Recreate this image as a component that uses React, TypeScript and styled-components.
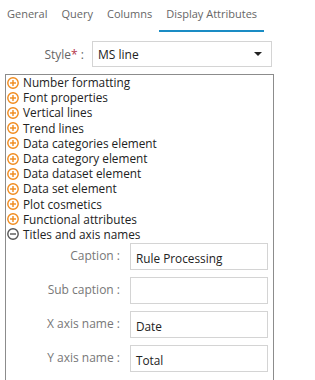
import { FC } from 'react';
import styled, { createGlobalStyle } from 'styled-components';

const GlobalStyle = createGlobalStyle`
  body {
    margin: 0;
    background: #fff;
    font-family: 'Open Sans', 'Noto Sans', sans-serif;
  }
`;

const sections = [
  'Number formatting',
  'Font properties',
  'Vertical lines',
  'Trend lines',
  'Data categories element',
  'Data category element',
  'Data dataset element',
  'Data set element',
  'Plot cosmetics',
  'Functional attributes',
];

const fields = [
  { label: 'Caption', value: 'Rule Processing' },
  { label: 'Sub caption', value: '' },
  { label: 'X axis name', value: 'Date' },
  { label: 'Y axis name', value: 'Total' },
];

const tabs = ['General', 'Query', 'Columns', 'Display Attributes'];

const ToggleIcon: FC<{ open?: boolean }> = ({ open }) => {
  const color = open ? '#555' : '#f08a1c';
  return (
    <svg width="12" height="12" viewBox="0 0 12 12">
      <circle cx="6" cy="6" r="5.2" fill="none" stroke={color} strokeWidth="1.4" />
      <line x1="3" y1="6" x2="9" y2="6" stroke={color} strokeWidth="1.4" />
      {!open && <line x1="6" y1="3" x2="6" y2="9" stroke={color} strokeWidth="1.4" />}
    </svg>
  );
};

const App: FC = () => (
  <Page>
    <GlobalStyle />
    <TabBar>
      {tabs.map((t, i) => (
        <Tab key={t} active={i === tabs.length - 1}>
          {t}
        </Tab>
      ))}
    </TabBar>

    <StyleRow>
      <StyleLabel>
        Style<Req>*</Req> :
      </StyleLabel>
      <Select>
        <span>MS line</span>
        <Caret />
      </Select>
    </StyleRow>

    <Panel>
      {sections.map(s => (
        <Section key={s}>
          <ToggleIcon />
          {s}
        </Section>
      ))}
      <Section>
        <ToggleIcon open />
        Titles and axis names
      </Section>
      <Fields>
        {fields.map(f => (
          <FieldRow key={f.label}>
            <FieldLabel>{f.label} :</FieldLabel>
            <Input>{f.value}</Input>
          </FieldRow>
        ))}
      </Fields>
    </Panel>
  </Page>
);

export default App;

const Page = styled.div`
  width: 315px;
  height: 380px;
  overflow: hidden;
`;

const TabBar = styled.div`
  display: flex;
  height: 33px;
`;

const Tab = styled.div<{ active?: boolean }>`
  padding: 6px 7px 0;
  font-size: 11px;
  color: #666;
  box-sizing: border-box;
  height: 32px;
  border-bottom: 2px solid ${p => (p.active ? '#1a8cc4' : 'transparent')};

  &:first-child {
    padding-left: 7px;
  }
`;

const StyleRow = styled.div`
  display: flex;
  align-items: center;
  margin-top: 8px;
`;

const StyleLabel = styled.div`
  width: 84px;
  text-align: right;
  font-size: 12px;
  color: #666;
  margin-right: 8px;
`;

const Req = styled.span`
  color: #b3344a;
`;

const Select = styled.div`
  width: 180px;
  height: 26px;
  box-sizing: border-box;
  border: 1px solid #d4d4d4;
  display: flex;
  align-items: center;
  justify-content: space-between;
  padding: 0 9px 0 5px;
  font-size: 12px;
  color: #222;
`;

const Caret = styled.span`
  width: 0;
  height: 0;
  border-left: 4px solid transparent;
  border-right: 4px solid transparent;
  border-top: 4px solid #222;
`;

const Panel = styled.div`
  margin: 7px 0 0 5px;
  width: 269px;
  height: 320px;
  box-sizing: border-box;
  border: 1px solid #8c8c8c;
`;

const Section = styled.div`
  display: flex;
  align-items: center;
  gap: 4px;
  height: 15.2px;
  line-height: 15px;
  padding-left: 1px;
  font-size: 11.8px;
  color: #222;
`;

const Fields = styled.div`
  display: flex;
  flex-direction: column;
  gap: 7px;
  padding-top: 1px;
`;

const FieldRow = styled.div`
  display: flex;
  align-items: flex-start;
`;

const FieldLabel = styled.div`
  width: 114px;
  text-align: right;
  font-size: 12px;
  color: #777;
  padding-top: 4px;
  margin-right: 10px;
`;

const Input = styled.div`
  width: 138px;
  height: 27px;
  box-sizing: border-box;
  border: 1px solid #d4d4d4;
  padding: 6px 5px 0;
  font-size: 11.8px;
  color: #222;
`;
